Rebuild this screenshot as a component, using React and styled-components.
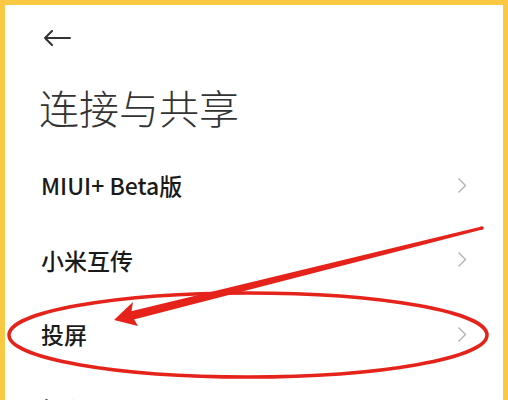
import React from "react";
import styled, { createGlobalStyle } from "styled-components";

const GlobalStyle = createGlobalStyle`
    html, body { margin: 0; padding: 0; background: #ffffff; }
    * { box-sizing: border-box; }
`;

const items = ["MIUI+ Beta版", "小米互传", "投屏", "打印"];

export default function App() {
    return (
        <Page>
            <GlobalStyle />
            <Frame>
                <TopBar>
                    <BackButton aria-label="返回">
                        <svg width="28" height="16" viewBox="0 0 28 16">
                            <path d="M27 8 H2 M9 1 L2 8 L9 15" fill="none" stroke="#333" strokeWidth="2" strokeLinecap="round" strokeLinejoin="round" />
                        </svg>
                    </BackButton>
                </TopBar>
                <Title>连接与共享</Title>
                <List>
                    {items.map((label) => (
                        <Row key={label}>
                            <RowLabel>{label}</RowLabel>
                            <Chevron width="10" height="17" viewBox="0 0 10 17">
                                <path d="M1.5 1.5 L8.5 8.5 L1.5 15.5" fill="none" stroke="#b3b3b3" strokeWidth="1.4" />
                            </Chevron>
                        </Row>
                    ))}
                </List>
            </Frame>

            {/* hand-drawn annotation over the screen */}
            <Annotation viewBox="0 0 508 400" width="508" height="400">
                <ellipse cx="248" cy="335" rx="239" ry="42" fill="none" stroke="#e5231b" strokeWidth="3.5" />
                <circle cx="482" cy="228" r="1.8" fill="#e5231b" />
                <polygon points="482.4,229.5 481.6,226.5 130,311.5 132,320" fill="#e5231b" />
                <polygon points="114,320 133,302 131,314 138,326" fill="#e5231b" />
            </Annotation>
        </Page>
    );
}

const Page = styled.div`
    position: relative;
    width: 508px;
    height: 400px;
    overflow: hidden;
`;

const Frame = styled.div`
    width: 508px;
    height: 400px;
    overflow: hidden;
    background: #ffffff;
    border: 5px solid #f9c944;
    border-bottom: none;
    display: flex;
    flex-direction: column;

    & > * { flex-shrink: 0; }
`;

const TopBar = styled.div`
    height: 66px;
    display: flex;
    align-items: center;
    padding-left: 38px;
`;

const BackButton = styled.div`
    display: flex;
    align-items: center;
`;

const Title = styled.h1`
    margin: 0;
    height: 72px;
    line-height: 72px;
    padding-left: 34px;
    font-family: "Noto Sans CJK SC", "Noto Sans", sans-serif;
    font-weight: 300;
    font-size: 40px;
    color: #333333;
`;

const List = styled.div`
    padding-top: 5px;
    display: flex;
    flex-direction: column;
`;

const Row = styled.div`
    height: 74.5px;
    flex-shrink: 0;
    display: flex;
    align-items: center;
    justify-content: space-between;
    padding: 0 36px;
`;

const RowLabel = styled.span`
    font-family: "Noto Sans CJK SC", "Noto Sans", sans-serif;
    font-weight: 500;
    font-size: 23px;
    color: #1a1a1a;
`;

const Chevron = styled.svg`
    display: block;
`;

const Annotation = styled.svg`
    position: absolute;
    left: 0;
    top: 0;
    pointer-events: none;
`;
